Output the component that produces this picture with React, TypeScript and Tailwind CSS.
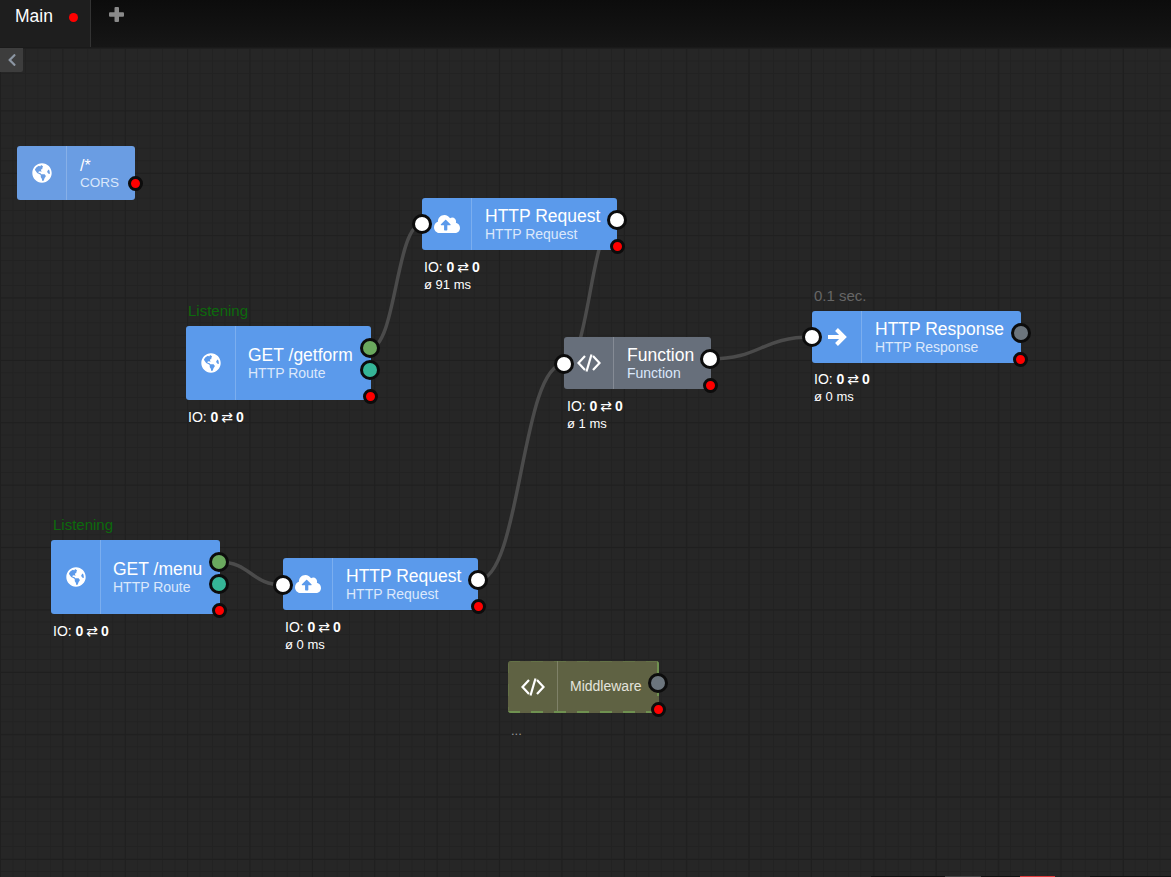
import type { ReactNode } from "react";
import { FaChevronLeft, FaCloudUploadAlt, FaGlobeAmericas } from "react-icons/fa";

type FlowNode = {
  place: string;
  box: string;
  icon: ReactNode;
  title: string;
  titleClass?: string;
  textClass?: string;
  subtitle?: string;
  subtitleClass?: string;
  above?: ReactNode;
  io?: boolean;
  ms?: string;
  infoClass?: string;
  dashed?: boolean;
  ports: string[];
};

const WHITE = "size-[20px] bg-white border-[3px]";
const GREEN = "size-[20px] bg-[#6aa95e] border-[3px]";
const TEAL = "size-[20px] bg-[#35b597] border-[3px]";
const GREY = "size-[20px] bg-[#6c757d] border-[3px]";
const RED = "size-[15px] bg-[#ff0000] border-[3px]";

function CodeIcon() {
  return (
    <svg width="24" height="18" viewBox="0 0 24 18" fill="none" stroke="currentColor" strokeWidth="2.2">
      <path d="M8 2 L1.5 9 L8 16" />
      <path d="M16 2 L22.5 9 L16 16" />
      <path d="M14.5 0.5 L9.5 17.5" />
    </svg>
  );
}

function ArrowIcon() {
  return (
    <svg width="20" height="20" viewBox="0 0 20 20" fill="none" stroke="currentColor" strokeWidth="4">
      <path d="M1 10 H17" />
      <path d="M9.5 2.5 L17 10 L9.5 17.5" />
    </svg>
  );
}

const globe = <FaGlobeAmericas className="size-[20px]" />;
const cloud = <FaCloudUploadAlt className="size-[26px]" />;
const listening = <span className="text-[15px] text-[#0c6a0c]">Listening</span>;

const nodes: FlowNode[] = [
  {
    place: "left-[17px] top-[98px] w-[118px]",
    box: "h-[54px] bg-[#6a9de3]",
    icon: globe,
    title: "/*",
    titleClass: "text-[16px] leading-[18px]",
    subtitle: "CORS",
    subtitleClass: "text-[13.5px] leading-[16px]",
    ports: [`${RED} left-[111px] top-[30px]`],
  },
  {
    place: "left-[186px] top-[278px] w-[185px]",
    box: "h-[74px] bg-[#5b9aeb]",
    icon: globe,
    title: "GET /getform",
    textClass: "pl-[12px]",
    subtitle: "HTTP Route",
    above: listening,
    io: true,
    ports: [`${GREEN} left-[174px] top-[12px]`, `${TEAL} left-[174px] top-[34px]`, `${RED} left-[177px] top-[63px]`],
  },
  {
    place: "left-[51px] top-[492px] w-[169px]",
    box: "h-[74px] bg-[#5b9aeb]",
    icon: globe,
    title: "GET /menu",
    textClass: "pl-[12px]",
    subtitle: "HTTP Route",
    above: listening,
    io: true,
    ports: [`${GREEN} left-[158px] top-[12px]`, `${TEAL} left-[158px] top-[34px]`, `${RED} left-[161px] top-[63px]`],
  },
  {
    place: "left-[422px] top-[150px] w-[195px]",
    box: "h-[52px] bg-[#5b9aeb]",
    icon: cloud,
    title: "HTTP Request",
    subtitle: "HTTP Request",
    io: true,
    ms: "91",
    ports: [`${WHITE} -left-[10px] top-[16px]`, `${WHITE} left-[185px] top-[12px]`, `${RED} left-[188px] top-[41px]`],
  },
  {
    place: "left-[283px] top-[510px] w-[195px]",
    box: "h-[52px] bg-[#5b9aeb]",
    icon: cloud,
    title: "HTTP Request",
    subtitle: "HTTP Request",
    io: true,
    ms: "0",
    ports: [`${WHITE} -left-[10px] top-[17px]`, `${WHITE} left-[185px] top-[12px]`, `${RED} left-[188px] top-[41px]`],
  },
  {
    place: "left-[564px] top-[289px] w-[147px]",
    box: "h-[52px] bg-[#676f7b]",
    icon: <CodeIcon />,
    title: "Function",
    subtitle: "Function",
    io: true,
    ms: "1",
    infoClass: "mt-[9px] pl-[3px]",
    ports: [`${WHITE} -left-[10px] top-[17px]`, `${WHITE} left-[136px] top-[12px]`, `${RED} left-[139px] top-[41px]`],
  },
  {
    place: "left-[812px] top-[263px] w-[209px]",
    box: "h-[52px] bg-[#5b9aeb]",
    icon: <ArrowIcon />,
    title: "HTTP Response",
    subtitle: "HTTP Response",
    above: <span className="text-[15px] text-[#666666]">0.1 sec.</span>,
    io: true,
    ms: "0",
    infoClass: "mt-[8px] pl-[2px]",
    ports: [`${WHITE} -left-[10px] top-[16px]`, `${GREY} left-[199px] top-[12px]`, `${RED} left-[201px] top-[41px]`],
  },
  {
    place: "left-[508px] top-[613px] w-[151px]",
    box: "h-[52px] bg-[#5f6243]",
    icon: <CodeIcon />,
    title: "Middleware",
    titleClass: "-mt-[4px] text-[14px] leading-[16px] text-[#e4e4dc]",
    textClass: "pl-[12px]",
    dashed: true,
    ports: [`${GREY} left-[140px] top-[12px]`, `${RED} left-[143px] top-[41px]`],
  },
];

function NodeCard({ node }: { node: FlowNode }) {
  return (
    <div className={`absolute ${node.place}`}>
      {node.above && <div className="absolute bottom-full left-[2px] mb-[7px] leading-[16px]">{node.above}</div>}
      <div className="relative">
        <div className={`flex overflow-hidden rounded-[3px] text-white ${node.box}`}>
          <div className="flex w-[50px] shrink-0 items-center justify-center border-r border-white/20">{node.icon}</div>
          <div className={`flex min-w-0 flex-1 flex-col justify-center whitespace-nowrap pt-[2px] ${node.textClass ?? "pl-[13px]"}`}>
            <div className={node.titleClass ?? "text-[17.5px] leading-[19px]"}>{node.title}</div>
            {node.subtitle && (
              <div className={`text-[#dbe8fb] ${node.subtitleClass ?? "text-[14px] leading-[17px]"}`}>{node.subtitle}</div>
            )}
          </div>
        </div>
        {node.dashed && (
          <span className="absolute inset-0 rounded-[3px] bg-no-repeat bg-[image:repeating-linear-gradient(to_right,#6f9150_0_12px,transparent_12px_23px),repeating-linear-gradient(to_bottom,#6f9150_0_12px,transparent_12px_23px),repeating-linear-gradient(to_right,#6f915055_0_12px,transparent_12px_23px),repeating-linear-gradient(to_bottom,#6f915055_0_12px,transparent_12px_23px)] bg-[size:100%_2px,2px_100%,100%_1px,1px_100%] bg-[position:0_100%,100%_0,0_0,0_0]" />
        )}
        {node.ports.map((port) => (
          <span key={port} className={`absolute rounded-full border-[#0c0c0c] ${port}`} />
        ))}
      </div>
      {node.io && (
        <div className={`text-white ${node.infoClass ?? "mt-[9px] pl-[2px]"}`}>
          <div className="text-[14px] leading-[17px]">
            IO: <b>0</b> <span className="font-['DejaVu_Sans',sans-serif] text-[14px] leading-none -mx-[1px]">⇄</span> <b>0</b>
          </div>
          {node.ms && <div className="mt-[1px] text-[13px] leading-[16px]">ø {node.ms} ms</div>}
        </div>
      )}
      {!node.subtitle && (
        <div className="mt-[9px] pl-[3px] text-[13px] leading-[17px] text-[#999999]">...</div>
      )}
    </div>
  );
}

export default function App() {
  return (
    <div className="flex h-[877px] w-[1171px] flex-col overflow-hidden bg-[#252525] font-['Liberation_Sans',Arial,sans-serif]">
      {/* tabs */}
      <div className="flex h-[48px] shrink-0 items-start border-b border-[#1a1a1a] bg-gradient-to-b from-[#0c0c0c] to-[#161616]">
        <div className="flex h-full w-[91px] items-start border-r border-[#333333] bg-[#1e1e1e] pl-[15px] pt-[6px] text-[17.5px] leading-[20px] text-white">
          Main
          <span className="ml-[16px] mt-[7px] size-[9px] shrink-0 rounded-full bg-[#ff0000]" />
        </div>
        <svg className="ml-[18px] mt-[7px] text-[#8a8a8a]" width="15" height="15" viewBox="0 0 15 15" fill="currentColor">
          <rect x="5.5" y="0" width="4.5" height="15" rx="1" />
          <rect x="0" y="5.2" width="15" height="4.5" rx="1" />
        </svg>
      </div>

      {/* canvas */}
      <div className="relative flex-1 bg-[#262626] bg-[image:linear-gradient(to_right,#1f1f1f_1px,transparent_1px),linear-gradient(to_bottom,#1f1f1f_1px,transparent_1px),linear-gradient(to_right,#222222_1px,transparent_1px),linear-gradient(to_bottom,#222222_1px,transparent_1px)] bg-[size:62.4px_62.4px,62.4px_62.4px,12.48px_12.48px,12.48px_12.48px]">
        <button className="absolute left-0 top-0 flex h-[24px] w-[23px] items-center justify-center rounded-br-[2px] bg-[#3d3d3d] text-[#8c96a3]">
          <FaChevronLeft className="size-[14px]" />
        </button>

        {/* wires, coordinates are page space */}
        <svg className="absolute inset-0" width="1171" height="829" viewBox="0 48 1171 829" fill="none" stroke="#4b4b4b" strokeWidth="3.5">
          <path d="M370 348 C396 348 396 224 422 224" />
          <path d="M219 562 C251 562 251 585 283 585" />
          <path d="M478 580 C521 580 521 364 564 364" />
          <path d="M617 220 C590 220 590 364 564 364" />
          <path d="M710 359 C761 359 761 337 812 337" />
        </svg>

        {nodes.map((node) => (
          <NodeCard key={node.place} node={node} />
        ))}

        {/* edge of something cropped by the window */}
        <div className="absolute bottom-0 left-[871px] flex h-px">
          <span className="w-[74px] bg-[#111111]" />
          <span className="w-[36px] bg-[#444444]" />
          <span className="w-[39px] bg-[#111111]" />
          <span className="w-[35px] bg-[#e03a3a]" />
          <span className="w-[35px]" />
          <span className="w-[81px] bg-[#111111]" />
        </div>
      </div>
    </div>
  );
}
